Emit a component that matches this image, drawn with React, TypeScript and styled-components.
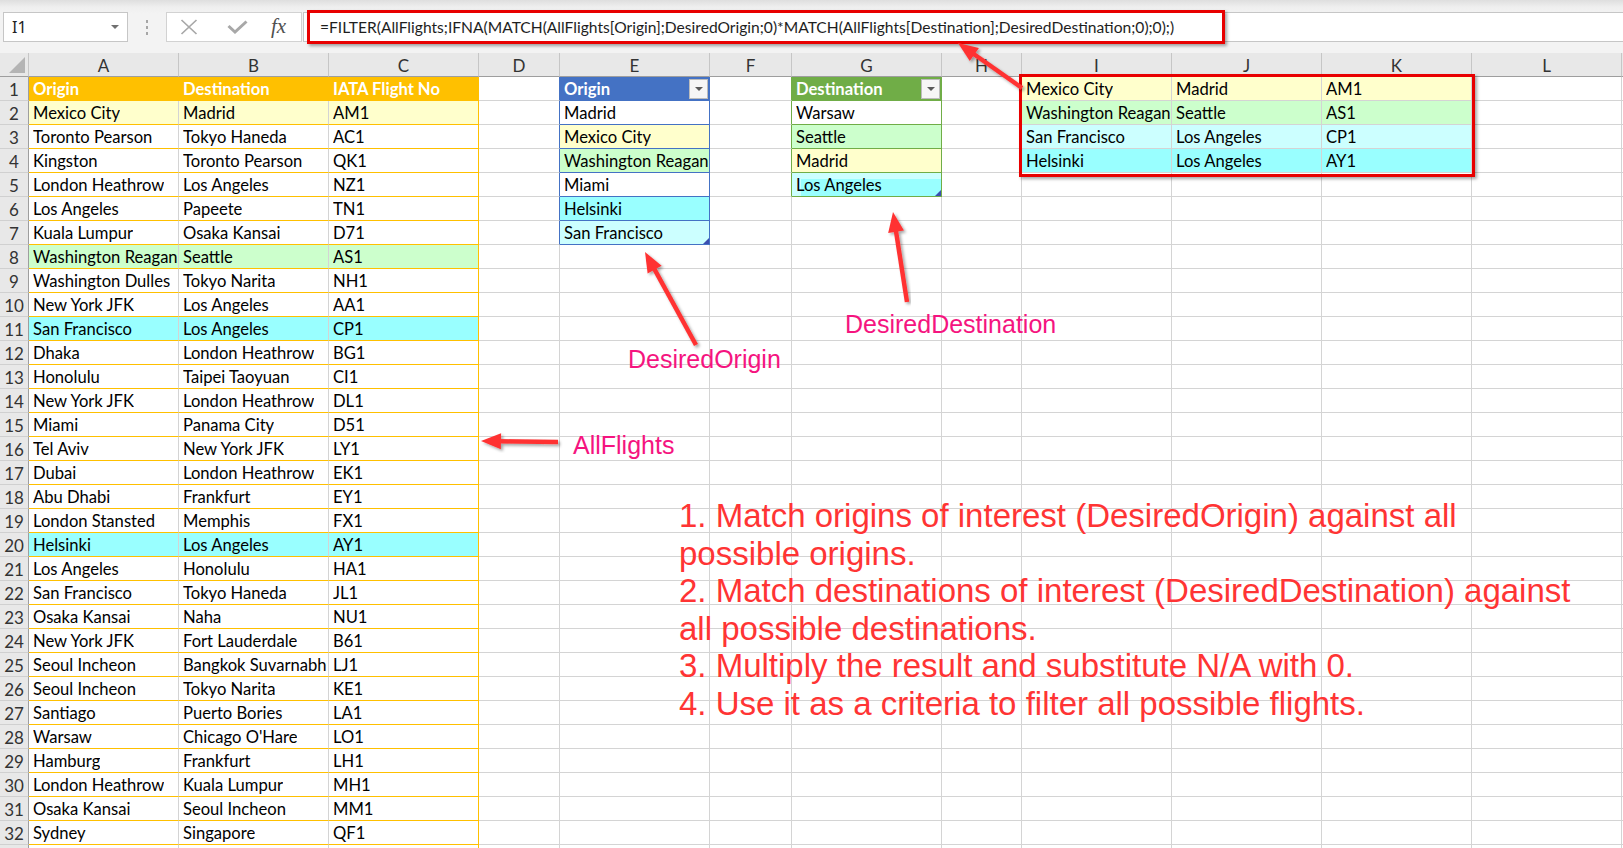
import React from 'react';
import styled, { createGlobalStyle } from 'styled-components';

const GlobalStyle = createGlobalStyle`
  html, body { margin: 0; padding: 0; background: #fff; overflow: hidden; }
  body { font-family: Lato, "Noto Sans", sans-serif; }
`;

const GRID = '#d4d4d4';
const GOLD = '#ffc000';
const BLUE = '#4472c4';
const GREEN = '#70ad47';
const YELLOW = '#ffffcc';
const MINT = '#ccffcc';
const AQUA = '#99ffff';
const ICE = '#ccffff';

const COLS = ['A', 'B', 'C', 'D', 'E', 'F', 'G', 'H', 'I', 'J', 'K', 'L', ''];
const ROW_COUNT = 33;

const flights: string[][] = [
  ['Origin', 'Destination', 'IATA Flight No'],
  ['Mexico City', 'Madrid', 'AM1'],
  ['Toronto Pearson', 'Tokyo Haneda', 'AC1'],
  ['Kingston', 'Toronto Pearson', 'QK1'],
  ['London Heathrow', 'Los Angeles', 'NZ1'],
  ['Los Angeles', 'Papeete', 'TN1'],
  ['Kuala Lumpur', 'Osaka Kansai', 'D71'],
  ['Washington Reagan', 'Seattle', 'AS1'],
  ['Washington Dulles', 'Tokyo Narita', 'NH1'],
  ['New York JFK', 'Los Angeles', 'AA1'],
  ['San Francisco', 'Los Angeles', 'CP1'],
  ['Dhaka', 'London Heathrow', 'BG1'],
  ['Honolulu', 'Taipei Taoyuan', 'CI1'],
  ['New York JFK', 'London Heathrow', 'DL1'],
  ['Miami', 'Panama City', 'D51'],
  ['Tel Aviv', 'New York JFK', 'LY1'],
  ['Dubai', 'London Heathrow', 'EK1'],
  ['Abu Dhabi', 'Frankfurt', 'EY1'],
  ['London Stansted', 'Memphis', 'FX1'],
  ['Helsinki', 'Los Angeles', 'AY1'],
  ['Los Angeles', 'Honolulu', 'HA1'],
  ['San Francisco', 'Tokyo Haneda', 'JL1'],
  ['Osaka Kansai', 'Naha', 'NU1'],
  ['New York JFK', 'Fort Lauderdale', 'B61'],
  ['Seoul Incheon', 'Bangkok Suvarnabhumi', 'LJ1'],
  ['Seoul Incheon', 'Tokyo Narita', 'KE1'],
  ['Santiago', 'Puerto Bories', 'LA1'],
  ['Warsaw', "Chicago O'Hare", 'LO1'],
  ['Hamburg', 'Frankfurt', 'LH1'],
  ['London Heathrow', 'Kuala Lumpur', 'MH1'],
  ['Osaka Kansai', 'Seoul Incheon', 'MM1'],
  ['Sydney', 'Singapore', 'QF1'],
];

const flightFill: Record<number, string> = { 2: YELLOW, 8: MINT, 11: AQUA, 20: AQUA };

const origins: [string, string | undefined][] = [
  ['Madrid', undefined],
  ['Mexico City', YELLOW],
  ['Washington Reagan', MINT],
  ['Miami', undefined],
  ['Helsinki', AQUA],
  ['San Francisco', ICE],
];

const destinations: [string, string | undefined][] = [
  ['Warsaw', undefined],
  ['Seattle', MINT],
  ['Madrid', YELLOW],
  ['Los Angeles', AQUA],
];

const results: [string, string, string, string][] = [
  ['Mexico City', 'Madrid', 'AM1', YELLOW],
  ['Washington Reagan', 'Seattle', 'AS1', MINT],
  ['San Francisco', 'Los Angeles', 'CP1', ICE],
  ['Helsinki', 'Los Angeles', 'AY1', AQUA],
];

type CellSpec = {
  text?: string;
  bg?: string;
  bb: string;
  br: string;
  bold?: boolean;
  color?: string;
  filter?: boolean;
  handle?: boolean;
  smear?: boolean;
};

function buildCell(r: number, c: number): CellSpec {
  const s: CellSpec = { bb: GRID, br: GRID };
  // AllFlights table A:C
  if (c <= 2) {
    s.bb = GOLD;
    if (c === 2) s.br = GOLD;
    if (r === 1) {
      s.bg = GOLD;
      s.br = GOLD;
      s.bold = true;
      s.color = '#fff';
      s.text = flights[0][c];
    } else if (r - 1 < flights.length) {
      s.text = flights[r - 1][c];
      s.bg = flightFill[r];
    }
  }
  // DesiredOrigin table E
  if (c === 3 && r <= 7) s.br = BLUE;
  if (c === 4 && r <= 7) {
    s.bb = BLUE;
    s.br = BLUE;
    if (r === 1) {
      s.text = 'Origin';
      s.bg = BLUE;
      s.bold = true;
      s.color = '#fff';
      s.filter = true;
    } else {
      const [t, bg] = origins[r - 2];
      s.text = t;
      s.bg = bg;
      if (r === 7) s.handle = true;
    }
  }
  // DesiredDestination table G
  if (c === 5 && r <= 5) s.br = GREEN;
  if (c === 6 && r <= 5) {
    s.bb = GREEN;
    s.br = GREEN;
    if (r === 1) {
      s.text = 'Destination';
      s.bg = GREEN;
      s.bold = true;
      s.color = '#fff';
      s.filter = true;
    } else {
      const [t, bg] = destinations[r - 2];
      s.text = t;
      s.bg = bg;
      if (r === 5) {
        s.handle = true;
        s.smear = true;
      }
    }
  }
  // Spilled result I:K
  if (c >= 8 && c <= 10 && r <= 4) {
    const row = results[r - 1];
    s.text = row[c - 8];
    s.bg = row[3];
  }
  return s;
}

const Page = styled.div`
  position: relative;
  width: 1623px;
  height: 848px;
  overflow: hidden;
  display: flex;
  flex-direction: column;
  background: #fff;
`;

const FormulaBar = styled.div`
  flex: none;
  height: 53px;
  box-sizing: border-box;
  padding: 12px 0 0 3px;
  display: flex;
  align-items: flex-start;
  background: linear-gradient(#dedede 0px, #efefef 7px, #f3f3f3 14px, #f3f3f3 100%);
`;

const NameBox = styled.div`
  width: 125px;
  height: 30px;
  box-sizing: border-box;
  border: 1px solid #c6c6c6;
  background: #fff;
  display: flex;
  align-items: center;
  padding: 0 8px 0 8px;
  font-family: "Noto Sans", "Open Sans", sans-serif;
  font-size: 16px;
  color: #222;
`;

const Caret = styled.span`
  margin-left: auto;
  width: 0;
  height: 0;
  border-left: 4px solid transparent;
  border-right: 4px solid transparent;
  border-top: 4px solid #707070;
`;

const Grip = styled.div`
  width: 38px;
  height: 30px;
  display: flex;
  flex-direction: column;
  align-items: center;
  justify-content: center;
  gap: 3px;
`;

const GripDot = styled.span`
  width: 2px;
  height: 3px;
  background: #a6a6a6;
`;

const FxBox = styled.div`
  width: 136px;
  height: 30px;
  box-sizing: border-box;
  border: 1px solid #d2d2d2;
  background: #fff;
  display: flex;
  align-items: center;
  padding-left: 12px;
`;

const IconSlot = styled.span<{ $ml: number }>`
  display: flex;
  align-items: center;
  margin-left: ${(p) => p.$ml}px;
`;

const FxGlyph = styled.span`
  font-family: "Liberation Serif", "DejaVu Serif", serif;
  font-style: italic;
  font-size: 21px;
  line-height: 1;
  color: #505050;
  margin-top: -2px;
`;

const FormulaInput = styled.div`
  flex: 1;
  margin-left: 1px;
  height: 30px;
  box-sizing: border-box;
  border: 1px solid #c6c6c6;
  border-right: none;
  background: #fff;
  padding-left: 16px;
  font-family: Lato, "Noto Sans", sans-serif;
  font-size: 15.6px;
  line-height: 28px;
  color: #1e1e1e;
  white-space: nowrap;
  overflow: hidden;
`;

const Sheet = styled.div`
  flex: 1;
  min-height: 0;
  overflow: hidden;
  display: grid;
  grid-template-columns: 29px 150px 150px 150px 81px 150px 82px 150px 80px 150px 150px 150px 150px 1fr;
  grid-auto-rows: 24px;
  align-content: start;
  font-family: Lato, "Noto Sans", sans-serif;
`;

const Corner = styled.div`
  position: relative;
  box-sizing: border-box;
  background: #e8e8e8;
  border-right: 1px solid #c6c6c6;
  border-bottom: 1px solid #9e9e9e;
  &::after {
    content: '';
    position: absolute;
    right: 3px;
    bottom: 3px;
    width: 16px;
    height: 16px;
    background: #b4b4b4;
    clip-path: polygon(100% 0, 100% 100%, 0 100%);
  }
`;

const ColHead = styled.div`
  box-sizing: border-box;
  background: #e8e8e8;
  border-right: 1px solid #c6c6c6;
  border-bottom: 1px solid #9e9e9e;
  padding-top: 2px;
  text-align: center;
  font-size: 17px;
  line-height: 21px;
  color: #333;
  overflow: hidden;
`;

const RowHead = styled.div`
  box-sizing: border-box;
  background: #e8e8e8;
  border-right: 1px solid #9e9e9e;
  border-bottom: 1px solid #d0d0d0;
  padding-top: 2px;
  text-align: center;
  font-size: 17px;
  line-height: 21px;
  color: #333;
  overflow: hidden;
`;

const Cell = styled.div<{
  $bg?: string;
  $bb: string;
  $br: string;
  $bold?: boolean;
  $color?: string;
  $smear?: boolean;
}>`
  position: relative;
  box-sizing: border-box;
  min-width: 0;
  display: flex;
  padding: 2px 1px 0 4px;
  border-right: 1px solid ${(p) => p.$br};
  border-bottom: 1px solid ${(p) => p.$bb};
  background: ${(p) =>
    p.$smear
      ? `linear-gradient(to bottom, ${ICE} 0 6px, transparent 6px), linear-gradient(to right, ${ICE} 0 9px, ${AQUA} 9px)`
      : p.$bg ?? '#fff'};
  color: ${(p) => p.$color ?? '#000'};
  font-weight: ${(p) => (p.$bold ? 700 : 400)};
  font-size: 16.6px;
  line-height: 21px;
  white-space: nowrap;
  overflow: hidden;
`;

const CellText = styled.span`
  overflow: hidden;
`;

const FilterButton = styled.span`
  margin-left: auto;
  margin-top: -2px;
  align-self: center;
  flex: none;
  width: 19px;
  height: 20px;
  box-sizing: border-box;
  border: 1px solid #bcbcbc;
  background: #f6f6f6;
  display: flex;
  align-items: center;
  justify-content: center;
  &::after {
    content: '';
    border-left: 4px solid transparent;
    border-right: 4px solid transparent;
    border-top: 4px solid #5a5a5a;
  }
`;

const ResizeHandle = styled.span`
  position: absolute;
  right: 0;
  bottom: 0;
  width: 6px;
  height: 6px;
  background: #3b4fb0;
  clip-path: polygon(100% 0, 100% 100%, 0 100%);
`;

const Overlay = styled.div`
  position: absolute;
  inset: 0;
  pointer-events: none;
`;

const RedFrame = styled.div<{ $x: number; $y: number; $w: number; $h: number }>`
  position: absolute;
  left: ${(p) => p.$x}px;
  top: ${(p) => p.$y}px;
  width: ${(p) => p.$w}px;
  height: ${(p) => p.$h}px;
  box-sizing: border-box;
  border: 3px solid #e80000;
  box-shadow: 2px 2px 3px rgba(0, 0, 0, 0.35);
`;

const ArrowLayer = styled.svg`
  position: absolute;
  left: 0;
  top: 0;
`;

const Label = styled.div<{ $x: number; $y: number }>`
  position: absolute;
  left: ${(p) => p.$x}px;
  top: ${(p) => p.$y}px;
  font-family: "Liberation Sans", Arial, sans-serif;
  font-size: 25px;
  line-height: 29px;
  color: #f5147f;
  white-space: nowrap;
`;

const Notes = styled.div`
  position: absolute;
  left: 679px;
  top: 497px;
  font-family: "Liberation Sans", Arial, sans-serif;
  font-size: 33px;
  line-height: 37.5px;
  color: #ff3434;
  white-space: nowrap;
`;

const NoteLine = styled.div``;

const arrows = [
  { x1: 1022, y1: 88, x2: 958, y2: 43 },
  { x1: 696, y1: 345, x2: 645, y2: 252 },
  { x1: 907, y1: 302, x2: 893, y2: 212 },
  { x1: 558, y1: 442, x2: 481, y2: 441 },
];

function arrowGeom(a: { x1: number; y1: number; x2: number; y2: number }) {
  const dx = a.x2 - a.x1;
  const dy = a.y2 - a.y1;
  const len = Math.hypot(dx, dy);
  const ux = dx / len;
  const uy = dy / len;
  const L = 20;
  const W = 8;
  const bx = a.x2 - ux * L;
  const by = a.y2 - uy * L;
  const nx = -uy;
  const ny = ux;
  return {
    x1: a.x1,
    y1: a.y1,
    x2: bx + ux * 3,
    y2: by + uy * 3,
    head: `${a.x2},${a.y2} ${bx + nx * W},${by + ny * W} ${bx - nx * W},${by - ny * W}`,
  };
}

const FORMULA =
  '=FILTER(AllFlights;IFNA(MATCH(AllFlights[Origin];DesiredOrigin;0)*MATCH(AllFlights[Destination];DesiredDestination;0);0);)';

export default function App() {
  const rows = Array.from({ length: ROW_COUNT }, (_, i) => i + 1);
  return (
    <Page>
      <GlobalStyle />
      <FormulaBar>
        <NameBox>
          <span>I1</span>
          <Caret />
        </NameBox>
        <Grip>
          <GripDot />
          <GripDot />
          <GripDot />
        </Grip>
        <FxBox>
          <IconSlot $ml={1}>
            <svg width="18" height="16" viewBox="0 0 18 16">
              <path d="M1.5 1 L16.5 15 M16.5 1 L1.5 15" stroke="#a8a8a8" strokeWidth="1.7" fill="none" />
            </svg>
          </IconSlot>
          <IconSlot $ml={29}>
            <svg width="21" height="14" viewBox="0 0 21 14">
              <path d="M1.5 6 L8 12 L19.5 1.5" stroke="#a8a8a8" strokeWidth="3" fill="none" />
            </svg>
          </IconSlot>
          <IconSlot $ml={23}>
            <FxGlyph>fx</FxGlyph>
          </IconSlot>
        </FxBox>
        <FormulaInput>{FORMULA}</FormulaInput>
      </FormulaBar>

      <Sheet>
        <Corner />
        {COLS.map((c, i) => (
          <ColHead key={'h' + i}>{c}</ColHead>
        ))}
        {rows.map((r) => (
          <React.Fragment key={r}>
            <RowHead>{r}</RowHead>
            {COLS.map((_, c) => {
              const s = buildCell(r, c);
              return (
                <Cell
                  key={c}
                  $bg={s.bg}
                  $bb={s.bb}
                  $br={s.br}
                  $bold={s.bold}
                  $color={s.color}
                  $smear={s.smear}
                >
                  {s.text && <CellText>{s.text}</CellText>}
                  {s.filter && <FilterButton />}
                  {s.handle && <ResizeHandle />}
                </Cell>
              );
            })}
          </React.Fragment>
        ))}
      </Sheet>

      <Overlay>
        <RedFrame $x={307} $y={10} $w={918} $h={34} />
        <RedFrame $x={1019} $y={74} $w={456} $h={103} />
        <ArrowLayer width="1623" height="848" viewBox="0 0 1623 848">
          <defs>
            <filter id="arrowShadow" x="-20%" y="-20%" width="140%" height="140%">
              <feDropShadow dx="2" dy="2" stdDeviation="1.5" floodColor="#000" floodOpacity="0.35" />
            </filter>
          </defs>
          {arrows.map((a, i) => {
            const g = arrowGeom(a);
            return (
              <g key={i} filter="url(#arrowShadow)">
                <line x1={g.x1} y1={g.y1} x2={g.x2} y2={g.y2} stroke="#ff3333" strokeWidth="4.5" />
                <polygon points={g.head} fill="#ff3333" />
              </g>
            );
          })}
        </ArrowLayer>
        <Label $x={628} $y={345}>DesiredOrigin</Label>
        <Label $x={845} $y={310}>DesiredDestination</Label>
        <Label $x={573} $y={431}>AllFlights</Label>
        <Notes>
          <NoteLine>1. Match origins of interest (DesiredOrigin) against all</NoteLine>
          <NoteLine>possible origins.</NoteLine>
          <NoteLine>2. Match destinations of interest (DesiredDestination) against</NoteLine>
          <NoteLine>all possible destinations.</NoteLine>
          <NoteLine>3. Multiply the result and substitute N/A with 0.</NoteLine>
          <NoteLine>4. Use it as a criteria to filter all possible flights.</NoteLine>
        </Notes>
      </Overlay>
    </Page>
  );
}
